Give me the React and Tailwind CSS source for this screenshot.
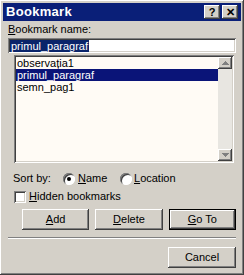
import { useState } from "react";

const raised =
  "shadow-[inset_-1px_-1px_#404040,inset_1px_1px_#ffffff,inset_-2px_-2px_#808080,inset_2px_2px_#d4d0c8]";
const sunken =
  "shadow-[inset_1px_1px_#808080,inset_-1px_-1px_#ffffff,inset_2px_2px_#404040,inset_-2px_-2px_#d4d0c8]";
const raisedDefault =
  "shadow-[inset_-1px_-1px_#000000,inset_1px_1px_#000000,inset_-2px_-2px_#404040,inset_2px_2px_#ffffff,inset_-3px_-3px_#808080]";

function Btn({ children, def }) {
  return (
    <button
      className={`h-[21px] w-[68px] bg-[#d4d0c8] text-[11px] text-black ${def ? raisedDefault : raised}`}
    >
      {children}
    </button>
  );
}

function Radio({ checked }) {
  return (
    <span className="relative inline-block h-[12px] w-[12px] shrink-0 rounded-full bg-white shadow-[inset_1px_1px_#808080,inset_-1px_-1px_#ffffff,inset_2px_2px_#404040]">
      {checked && (
        <span className="absolute left-[4px] top-[4px] h-[4px] w-[4px] rounded-full bg-black" />
      )}
    </span>
  );
}

export default function App() {
  const [sel] = useState("primul_paragraf");
  const items = ["observația1", "primul_paragraf", "semn_pag1"];

  return (
    <div
      className={`flex h-[275px] w-[244px] flex-col bg-[#d4d0c8] p-[3px] text-[11px] text-black ${raised}`}
      style={{ fontFamily: "'Liberation Sans', Arial, sans-serif" }}
    >
      {/* title bar */}
      <div className="flex h-[18px] items-center justify-between bg-[#0a1f78] pl-[3px] pr-[3px]">
        <span className="text-[13px] font-bold tracking-[0.3px] text-white">Bookmark</span>
        <div className="flex">
          <span className={`flex h-[14px] w-[16px] items-center justify-center bg-[#d4d0c8] text-[11px] font-bold leading-none ${raised}`}>
            ?
          </span>
          <span className={`ml-[2px] flex h-[14px] w-[16px] items-center justify-center bg-[#d4d0c8] text-[11px] font-bold leading-none ${raised}`}>
            ✕
          </span>
        </div>
      </div>

      <div className="flex flex-1 flex-col px-[5px]">
        <div className="mt-[2px] h-[13px] leading-[13px]">
          <u>B</u>ookmark name:
        </div>
        <div className={`mt-[2px] flex h-[15px] items-center bg-white px-[2px] ${sunken}`}>
          <span className="bg-[#0a246a] px-[1px] leading-[12px] text-white">primul_paragraf</span>
        </div>

        {/* list */}
        <div className={`ml-[6px] mr-[2px] mt-[2px] flex h-[108px] bg-[#fffbf5] p-[2px] ${sunken}`}>
          <div className="flex flex-1 flex-col">
            {items.map((it) => (
              <div
                key={it}
                className={`h-[12px] pl-[1px] leading-[12px] ${
                  it === sel ? "bg-[#0a1478] text-white" : ""
                }`}
              >
                {it}
              </div>
            ))}
          </div>
          <div className="flex w-[14px] flex-col justify-between bg-[#e8e6e1]">
            <div className={`flex h-[12px] items-center justify-center bg-[#d4d0c8] ${raised}`}>
              <svg width="7" height="4" viewBox="0 0 7 4">
                <path d="M3 0h1v1h1v1h1v1h1v1H0V3h1V2h1V1h1z" fill="#808080" />
              </svg>
            </div>
            <div className={`flex h-[12px] items-center justify-center bg-[#d4d0c8] ${raised}`}>
              <svg width="7" height="4" viewBox="0 0 7 4">
                <path d="M0 0h7v1H6v1H5v1H4v1H3V3H2V2H1V1H0z" fill="#808080" />
              </svg>
            </div>
          </div>
        </div>

        {/* sort by */}
        <div className="mt-[9px] flex h-[13px] items-center">
          <span className="w-[55px] pl-[5px]">Sort by:</span>
          <Radio checked />
          <span className="ml-[3px] w-[42px]">
            <u>N</u>ame
          </span>
          <Radio />
          <span className="ml-[2px]">
            <u>L</u>ocation
          </span>
        </div>

        <div className="mt-[5px] flex h-[13px] items-center pl-[6px]">
          <span className={`h-[12px] w-[12px] bg-white ${sunken}`} />
          <span className="ml-[3px]">
            <u>H</u>idden bookmarks
          </span>
        </div>

        <div className="mt-[6px] flex gap-[6px] pl-[14px]">
          <Btn>
            <u>A</u>dd
          </Btn>
          <Btn>
            <u>D</u>elete
          </Btn>
          <Btn def>
            <u>G</u>o To
          </Btn>
        </div>

        <div className="mt-[7px] h-[2px] border-t border-b border-t-[#808080] border-b-white" />

        <div className="mt-[8px] flex justify-end">
          <Btn>Cancel</Btn>
        </div>
      </div>
    </div>
  );
}
